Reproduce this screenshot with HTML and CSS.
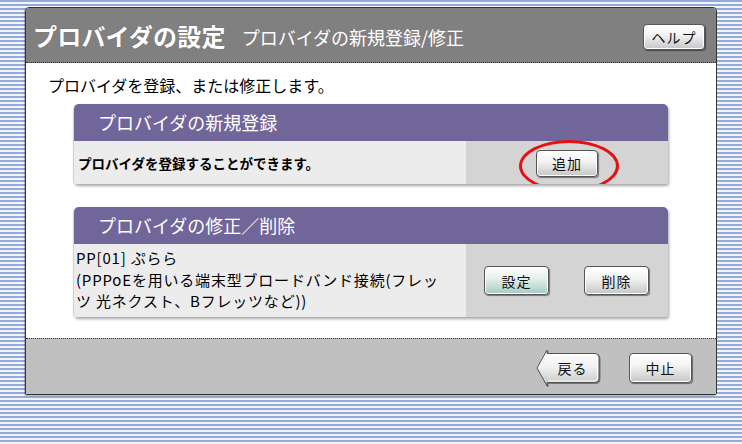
FILE: index.html
```html
<!DOCTYPE html>
<html lang="ja">
<head>
    <meta charset="UTF-8">
    <title>プロバイダの設定</title>
    <link rel="stylesheet" href="styles.css">
</head>
<body>

<div class="panel">
    <div class="panel-head">
        <h1 class="title">プロバイダの設定</h1>
        <span class="subtitle">プロバイダの新規登録/修正</span>
        <button class="btn btn-help">ヘルプ</button>
    </div>

    <div class="panel-body">
        <p class="intro">プロバイダを登録、または修正します。</p>

        <div class="box">
            <div class="box-head">プロバイダの新規登録</div>
            <div class="box-row row-add">
                <div class="box-text bold">プロバイダを登録することができます。</div>
                <div class="box-actions">
                    <span class="mark">
                        <button class="btn btn-add">追加</button>
                    </span>
                </div>
            </div>
        </div>

        <div class="box">
            <div class="box-head">プロバイダの修正／削除</div>
            <div class="box-row row-edit">
                <div class="box-text entry">
                    <div class="entry-line">PP[01] ぷらら</div>
                    <div class="entry-line">(PPPoEを用いる端末型ブロードバンド接続(フレッ</div>
                    <div class="entry-line">ツ 光ネクスト、Bフレッツなど))</div>
                </div>
                <div class="box-actions split">
                    <button class="btn btn-set">設定</button>
                    <button class="btn btn-del">削除</button>
                </div>
            </div>
        </div>
    </div>

    <div class="panel-foot">
        <button class="btn-back">
            <svg class="back-shape" width="64" height="38" viewBox="0 0 64 38">
                <defs>
                    <linearGradient id="backGrad" x1="0" y1="0" x2="0" y2="1">
                        <stop offset="0" stop-color="#ffffff"/>
                        <stop offset="0.45" stop-color="#f2f2f2"/>
                        <stop offset="1" stop-color="#c4c4c4"/>
                    </linearGradient>
                </defs>
                <path d="M11 1 L11 4.5 L59 4.5 Q63 4.5 63 8.5 L63 29.5 Q63 33.5 59 33.5 L11 33.5 L11 37 L1 19 Z"
                      fill="url(#backGrad)" stroke="#555" stroke-width="1"/>
                <path d="M12 6 L58.5 6 Q61.5 6 61.5 9 L61.5 29 Q61.5 32 58.5 32 L12 32"
                      fill="none" stroke="#fff" stroke-width="1"/>
            </svg>
            <span class="back-label">戻る</span>
        </button>
        <button class="btn btn-stop">中止</button>
    </div>
</div>

</body>
</html>
```

FILE: styles.css
```css
/* Page */
* {
    box-sizing: border-box;
    margin: 0;
    padding: 0;
}

body {
    font-family: "Noto Sans CJK JP", "Noto Sans", sans-serif;
    color: #000;
    background: repeating-linear-gradient(to bottom, #93a9d9 0, #93a9d9 2px, #f2f4f8 2px, #f2f4f8 4px);
    height: 444px;
    overflow: hidden;
    padding-top: 7px;
}

.panel {
    width: 692px;
    margin-left: 25px;
    border: 1px solid #333;
    border-radius: 4px 4px 2px 2px;
    background: #fff;
    overflow: hidden;
    box-shadow: -1px 1px 1px rgba(0, 0, 0, 0.25);
}

/* Header */
.panel-head {
    height: 55px;
    background: #808080;
    border-bottom: 1px dotted #333;
    display: flex;
    align-items: center;
    padding: 0 11px 0 7px;
    color: #fff;
}

.title {
    font-size: 24px;
    font-weight: bold;
    letter-spacing: 0.2px;
    text-shadow: 0 0 1px rgba(0, 0, 0, 0.3);
}

.subtitle {
    font-size: 18px;
    margin-left: 16px;
    margin-top: 3px;
}

.btn-help {
    margin-left: auto;
    width: 62px;
    height: 26px;
    margin-top: 3px;
}

/* Buttons */
.btn {
    font-family: "Noto Sans CJK JP", sans-serif;
    font-size: 14px;
    color: #111;
    border: 1px solid #555;
    border-radius: 4px;
    background: linear-gradient(#ffffff, #f4f4f4 40%, #c6c6c6);
    box-shadow: inset 0 0 0 1px #fff, 1px 1px 1px rgba(0, 0, 0, 0.45);
    letter-spacing: 1px;
    cursor: pointer;
}

.btn-add {
    width: 62px;
    height: 27px;
}

.btn-set,
.btn-del {
    width: 65px;
    height: 29px;
}

.btn-set {
    background: linear-gradient(#ffffff, #e6f1ef 40%, #a5cbc4);
}

.btn-stop {
    width: 63px;
    height: 30px;
}

/* Content */
.panel-body {
    height: 275px;
    padding: 12px 0 0 48px;
}

.intro {
    font-size: 16px;
    line-height: 20px;
    margin-left: -26px;
    margin-bottom: 9px;
}

.box {
    width: 594px;
    border-radius: 5px 5px 3px 3px;
    overflow: hidden;
    box-shadow: 1px 2px 3px rgba(0, 0, 0, 0.35), -1px 0 1px rgba(0, 0, 0, 0.15);
    margin-bottom: 23px;
}

.box-head {
    height: 37px;
    background: #716699;
    color: #fff;
    font-size: 18px;
    line-height: 37px;
    padding-left: 24px;
}

.box-row {
    display: flex;
    background: #ececec;
}

.row-add {
    height: 43px;
}

.row-edit {
    height: 73px;
}

.box-text {
    width: 392px;
    padding-left: 4px;
}

.bold {
    font-size: 13.5px;
    font-weight: bold;
    align-self: center;
}

.entry {
    font-size: 15px;
    letter-spacing: 0.8px;
    padding: 3px 0 0 2px;
}

.entry-line {
    height: 21.5px;
    line-height: 21.5px;
    white-space: nowrap;
}

.box-actions {
    flex: 1;
    background: #d4d4d4;
    display: flex;
    align-items: center;
    justify-content: center;
}

.split {
    justify-content: space-between;
    padding: 0 19px 0 18px;
}

/* red ring around the add button */
.mark {
    position: relative;
    display: inline-block;
    margin-top: 1px;
}

.mark::after {
    content: "";
    position: absolute;
    left: -17px;
    top: -10px;
    width: 94px;
    height: 46px;
    border: 3px solid #e51010;
    border-radius: 50%;
    pointer-events: none;
}

/* Footer */
.panel-foot {
    height: 56px;
    background: #c0c0c0;
    border-top: 1px dotted #333;
    display: flex;
    align-items: center;
    justify-content: flex-end;
    padding: 2px 24px 0 0;
}

.btn-back {
    position: relative;
    width: 64px;
    height: 38px;
    border: none;
    background: none;
    margin-right: 29px;
    cursor: pointer;
    display: flex;
    align-items: center;
    justify-content: center;
    padding-left: 9px;
}

.back-shape {
    position: absolute;
    left: 0;
    top: 0;
    filter: drop-shadow(1px 1px 0.5px rgba(0, 0, 0, 0.4));
}

.back-label {
    position: relative;
    font-family: "Noto Sans CJK JP", sans-serif;
    font-size: 14px;
    letter-spacing: 1px;
    color: #111;
}
```
